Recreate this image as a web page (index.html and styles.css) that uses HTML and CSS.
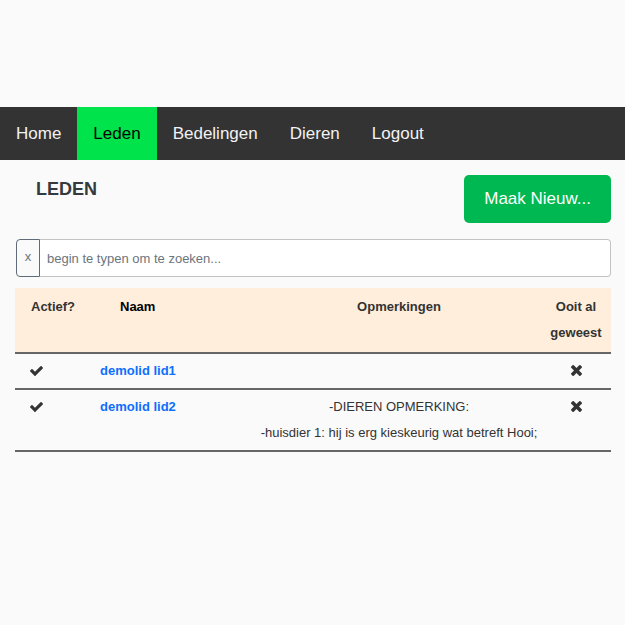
FILE: index.html
```html
<!DOCTYPE html>
<html lang="nl">
<head>
<meta charset="utf-8">
<title>Leden</title>
<link rel="stylesheet" href="styles.css">
</head>
<body>
<div class="topspace"></div>
<nav class="navbar">
  <a class="nav-item" href="#">Home</a>
  <a class="nav-item active" href="#">Leden</a>
  <a class="nav-item" href="#">Bedelingen</a>
  <a class="nav-item" href="#">Dieren</a>
  <a class="nav-item" href="#">Logout</a>
</nav>
<main class="content">
  <div class="title-row">
    <h2 class="title">LEDEN</h2>
    <button class="btn-new">Maak Nieuw...</button>
  </div>
  <div class="search">
    <span class="search-clear">x</span>
    <input class="search-input" type="text" placeholder="begin te typen om te zoeken...">
  </div>
  <table class="members">
    <colgroup>
      <col class="c1"><col class="c2"><col class="c3"><col class="c4">
    </colgroup>
    <thead>
      <tr>
        <th class="h-actief">Actief?</th>
        <th class="h-naam">Naam</th>
        <th class="h-opm">Opmerkingen</th>
        <th class="h-ooit">Ooit al geweest</th>
      </tr>
    </thead>
    <tbody>
      <tr>
        <td class="d-actief"><svg class="ic-check" viewBox="121 334 1550 1188"><path d="M1671 566q0 40-28 68l-724 724-136 136q-28 28-68 28t-68-28l-136-136-362-362q-28-28-28-68t28-68l136-136q28-28 68-28t68 28l294 295 656-657q28-28 68-28t68 28l136 136q28 28 28 68z"/></svg></td>
        <td class="d-naam"><a href="#">demolid lid1</a></td>
        <td class="d-opm"></td>
        <td class="d-ooit"><svg class="ic-times" viewBox="110 366 1188 1188"><path d="M1298 1322q0 40-28 68l-136 136q-28 28-68 28t-68-28l-294-294-294 294q-28 28-68 28t-68-28l-136-136q-28-28-28-68t28-68l294-294-294-294q-28-28-28-68t28-68l136-136q28-28 68-28t68 28l294 294 294-294q28-28 68-28t68 28l136 136q28 28 28 68t-28 68l-294 294 294 294q28 28 28 68z"/></svg></td>
      </tr>
      <tr>
        <td class="d-actief"><svg class="ic-check" viewBox="121 334 1550 1188"><path d="M1671 566q0 40-28 68l-724 724-136 136q-28 28-68 28t-68-28l-136-136-362-362q-28-28-28-68t28-68l136-136q28-28 68-28t68 28l294 295 656-657q28-28 68-28t68 28l136 136q28 28 28 68z"/></svg></td>
        <td class="d-naam"><a href="#">demolid lid2</a></td>
        <td class="d-opm">-DIEREN OPMERKING:<br>-huisdier 1: hij is erg kieskeurig wat betreft Hooi;</td>
        <td class="d-ooit"><svg class="ic-times" viewBox="110 366 1188 1188"><path d="M1298 1322q0 40-28 68l-136 136q-28 28-68 28t-68-28l-294-294-294 294q-28 28-68 28t-68-28l-136-136q-28-28-28-68t28-68l294-294-294-294q-28-28-28-68t28-68l136-136q28-28 68-28t68 28l294 294 294-294q28-28 68-28t68 28l136 136q28 28 28 68t-28 68l-294 294 294 294q28 28 28 68z"/></svg></td>
      </tr>
    </tbody>
  </table>
</main>
</body>
</html>
```
FILE: styles.css
```css
* { box-sizing: border-box; }
html, body {
  margin: 0;
  padding: 0;
  background: #fafafa;
  font-family: "Liberation Sans", Arial, sans-serif;
  color: #343a40;
}
.topspace { height: 107px; }
.navbar {
  display: flex;
  height: 53px;
  background: #333333;
}
.nav-item {
  display: block;
  padding: 0 16px;
  line-height: 53px;
  font-size: 17px;
  color: #f2f2f2;
  text-decoration: none;
}
.nav-item.active {
  background: #00e34b;
  color: #000;
}
.content {
  padding: 0 14px 0 15px;
}
.title-row {
  display: flex;
  justify-content: space-between;
  align-items: flex-start;
  margin-top: 15px;
}
.title {
  margin: 4px 0 0 21px;
  font-size: 18px;
  line-height: 21px;
  font-weight: bold;
  color: #343a40;
}
.btn-new {
  height: 48px;
  padding: 0 20px;
  border: none;
  border-radius: 5px;
  background: #00b851;
  color: #fff;
  font-family: "Liberation Sans", Arial, sans-serif;
  font-size: 17px;
  line-height: 48px;
}
.search {
  display: flex;
  margin: 16px 0 0 1px;
  height: 38px;
}
.search-clear {
  width: 24px;
  border: 1px solid #5f6b78;
  border-radius: 4px 0 0 4px;
  font-size: 13px;
  color: #6c757d;
  text-align: center;
  line-height: 34px;
  background: #fafafa;
}
.search-input {
  flex: 1;
  border: 1px solid #c4c4c4;
  border-left: none;
  border-radius: 0 4px 4px 0;
  padding: 0 7px;
  font-family: "Liberation Sans", Arial, sans-serif;
  font-size: 13px;
  background: #fff;
  color: #333;
}
.search-input::placeholder { color: #6c757d; }
.members {
  width: 596px;
  margin-top: 11px;
  border-collapse: collapse;
  table-layout: fixed;
  font-size: 13px;
}
.c1 { width: 85px; }
.c2 { width: 157px; }
.c3 { width: 284px; }
.c4 { width: 70px; }
.members thead tr { background: #ffeedb; }
.members th {
  padding: 6px 0;
  line-height: 26px;
  font-weight: bold;
  vertical-align: top;
  color: #333;
  border-bottom: 2px solid #666;
}
.h-actief { text-align: left; padding-left: 16px !important; }
.h-naam { text-align: left; padding-left: 20px !important; color: #000 !important; }
.h-opm { text-align: center; }
.h-ooit { text-align: center; }
.members td {
  padding: 4px 0;
  line-height: 26px;
  vertical-align: top;
  border-bottom: 2px solid #666;
  color: #333;
}
.d-actief { padding-left: 15px !important; }
.d-naam a {
  color: #0d6efd;
  font-weight: bold;
  text-decoration: none;
}
.d-opm { text-align: center; }
.d-ooit { text-align: center; }
.ic-check {
  width: 13px;
  height: 10px;
  fill: #333;
  vertical-align: -1px;
}
.ic-times {
  width: 11px;
  height: 11px;
  fill: #333;
  vertical-align: -1px;
}
```
